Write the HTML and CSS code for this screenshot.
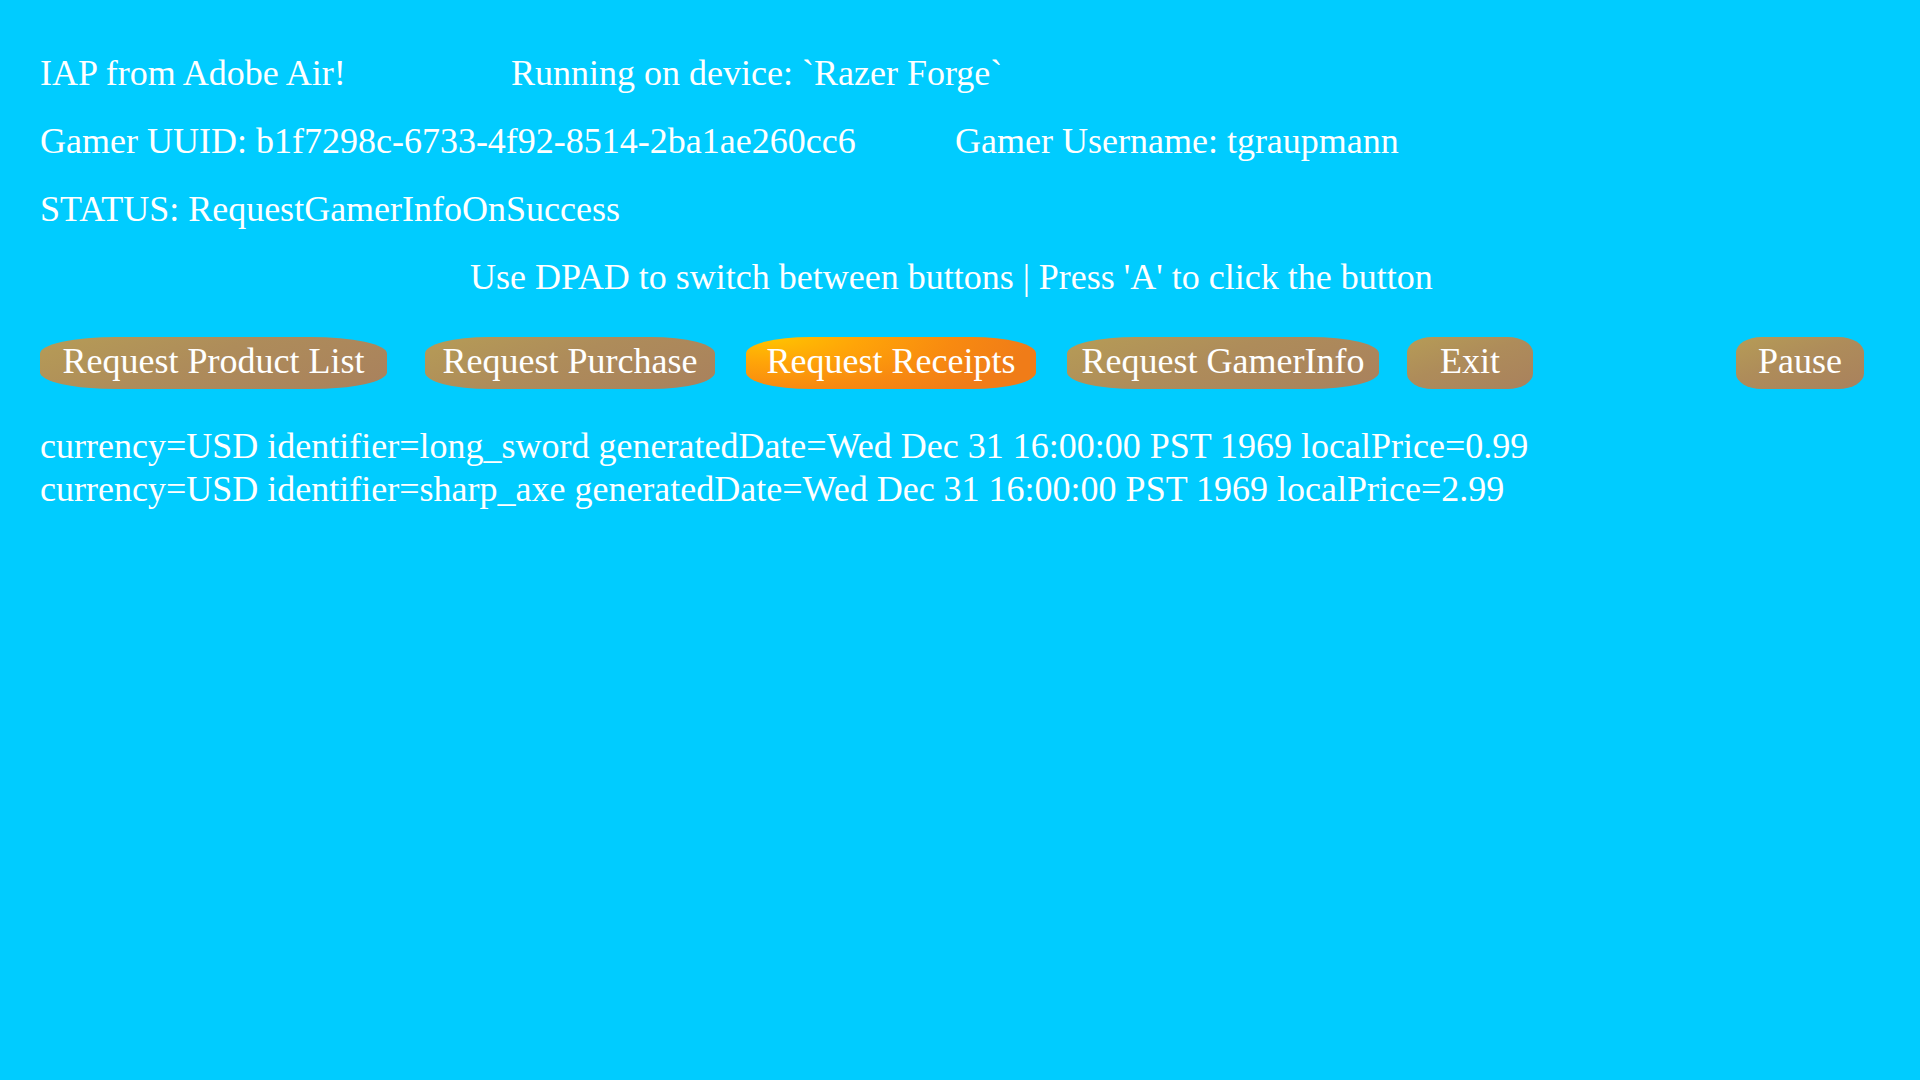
FILE: index.html
```html
<!DOCTYPE html>
<html lang="en">
<head>
<meta charset="utf-8">
<title>IAP from Adobe Air!</title>
<link rel="stylesheet" href="styles.css">
</head>
<body>
<main class="stage">
  <div class="row">
    <span class="col col-short">IAP from Adobe Air!</span>
    <span class="col">Running on device: `Razer Forge`</span>
  </div>
  <div class="row">
    <span class="col col-long">Gamer UUID: b1f7298c-6733-4f92-8514-2ba1ae260cc6</span>
    <span class="col">Gamer Username: tgraupmann</span>
  </div>
  <div class="row">
    <span class="col">STATUS: RequestGamerInfoOnSuccess</span>
  </div>
  <div class="row row-hint">
    <span class="hint">Use DPAD to switch between buttons | Press 'A' to click the button</span>
  </div>
  <div class="btn-row">
    <button class="btn btn-products">Request Product List</button>
    <button class="btn btn-purchase">Request Purchase</button>
    <button class="btn btn-receipts btn-active">Request Receipts</button>
    <button class="btn btn-gamer">Request GamerInfo</button>
    <button class="btn btn-exit">Exit</button>
    <button class="btn btn-pause">Pause</button>
  </div>
  <div class="log">
    <div class="log-line">currency=USD identifier=long_sword generatedDate=Wed Dec 31 16:00:00 PST 1969 localPrice=0.99</div>
    <div class="log-line">currency=USD identifier=sharp_axe generatedDate=Wed Dec 31 16:00:00 PST 1969 localPrice=2.99</div>
  </div>
</main>
</body>
</html>
```
FILE: styles.css
```css
html, body {
  margin: 0;
  padding: 0;
  background: #00ccff;
  height: 100%;
}

.stage {
  box-sizing: border-box;
  width: 1920px;
  height: 1080px;
  padding: 39px 0 0 40px;
  color: #ffffff;
  font-family: "Liberation Serif", "Times New Roman", serif;
  font-size: 36px;
  overflow: hidden;
}

.row {
  display: flex;
  height: 68px;
  line-height: 68px;
  white-space: nowrap;
}

.col-short {
  width: 471px;
}

.col-long {
  width: 915px;
}

.row-hint {
  padding-left: 430px;
}

.btn-row {
  display: flex;
  margin-top: 26px;
}

.btn {
  box-sizing: border-box;
  height: 52px;
  padding: 0 0 4px 0;
  border: none;
  border-radius: 22% / 32%;
  color: #ffffff;
  font-family: "Liberation Serif", "Times New Roman", serif;
  font-size: 36px;
  line-height: 48px;
  text-align: center;
  white-space: nowrap;
  background: linear-gradient(160deg, #b69c56 0%, #ae8c5a 45%, #a9815d 100%);
}

.btn-active {
  background: radial-gradient(ellipse 90% 140% at 8% 0%, #ffc400 0%, #ffa408 35%, #f88a10 70%, #f07c18 100%);
}

.btn-products { width: 347px; }
.btn-purchase { width: 290px; margin-left: 38px; }
.btn-receipts { width: 290px; margin-left: 31px; }
.btn-gamer    { width: 312px; margin-left: 31px; }
.btn-exit     { width: 126px; margin-left: 28px; border-radius: 20% / 30%; }
.btn-pause    { width: 128px; margin-left: 203px; border-radius: 20% / 30%; }

.log {
  margin-top: 36px;
  font-size: 36px;
  line-height: 43px;
  white-space: nowrap;
}
```
